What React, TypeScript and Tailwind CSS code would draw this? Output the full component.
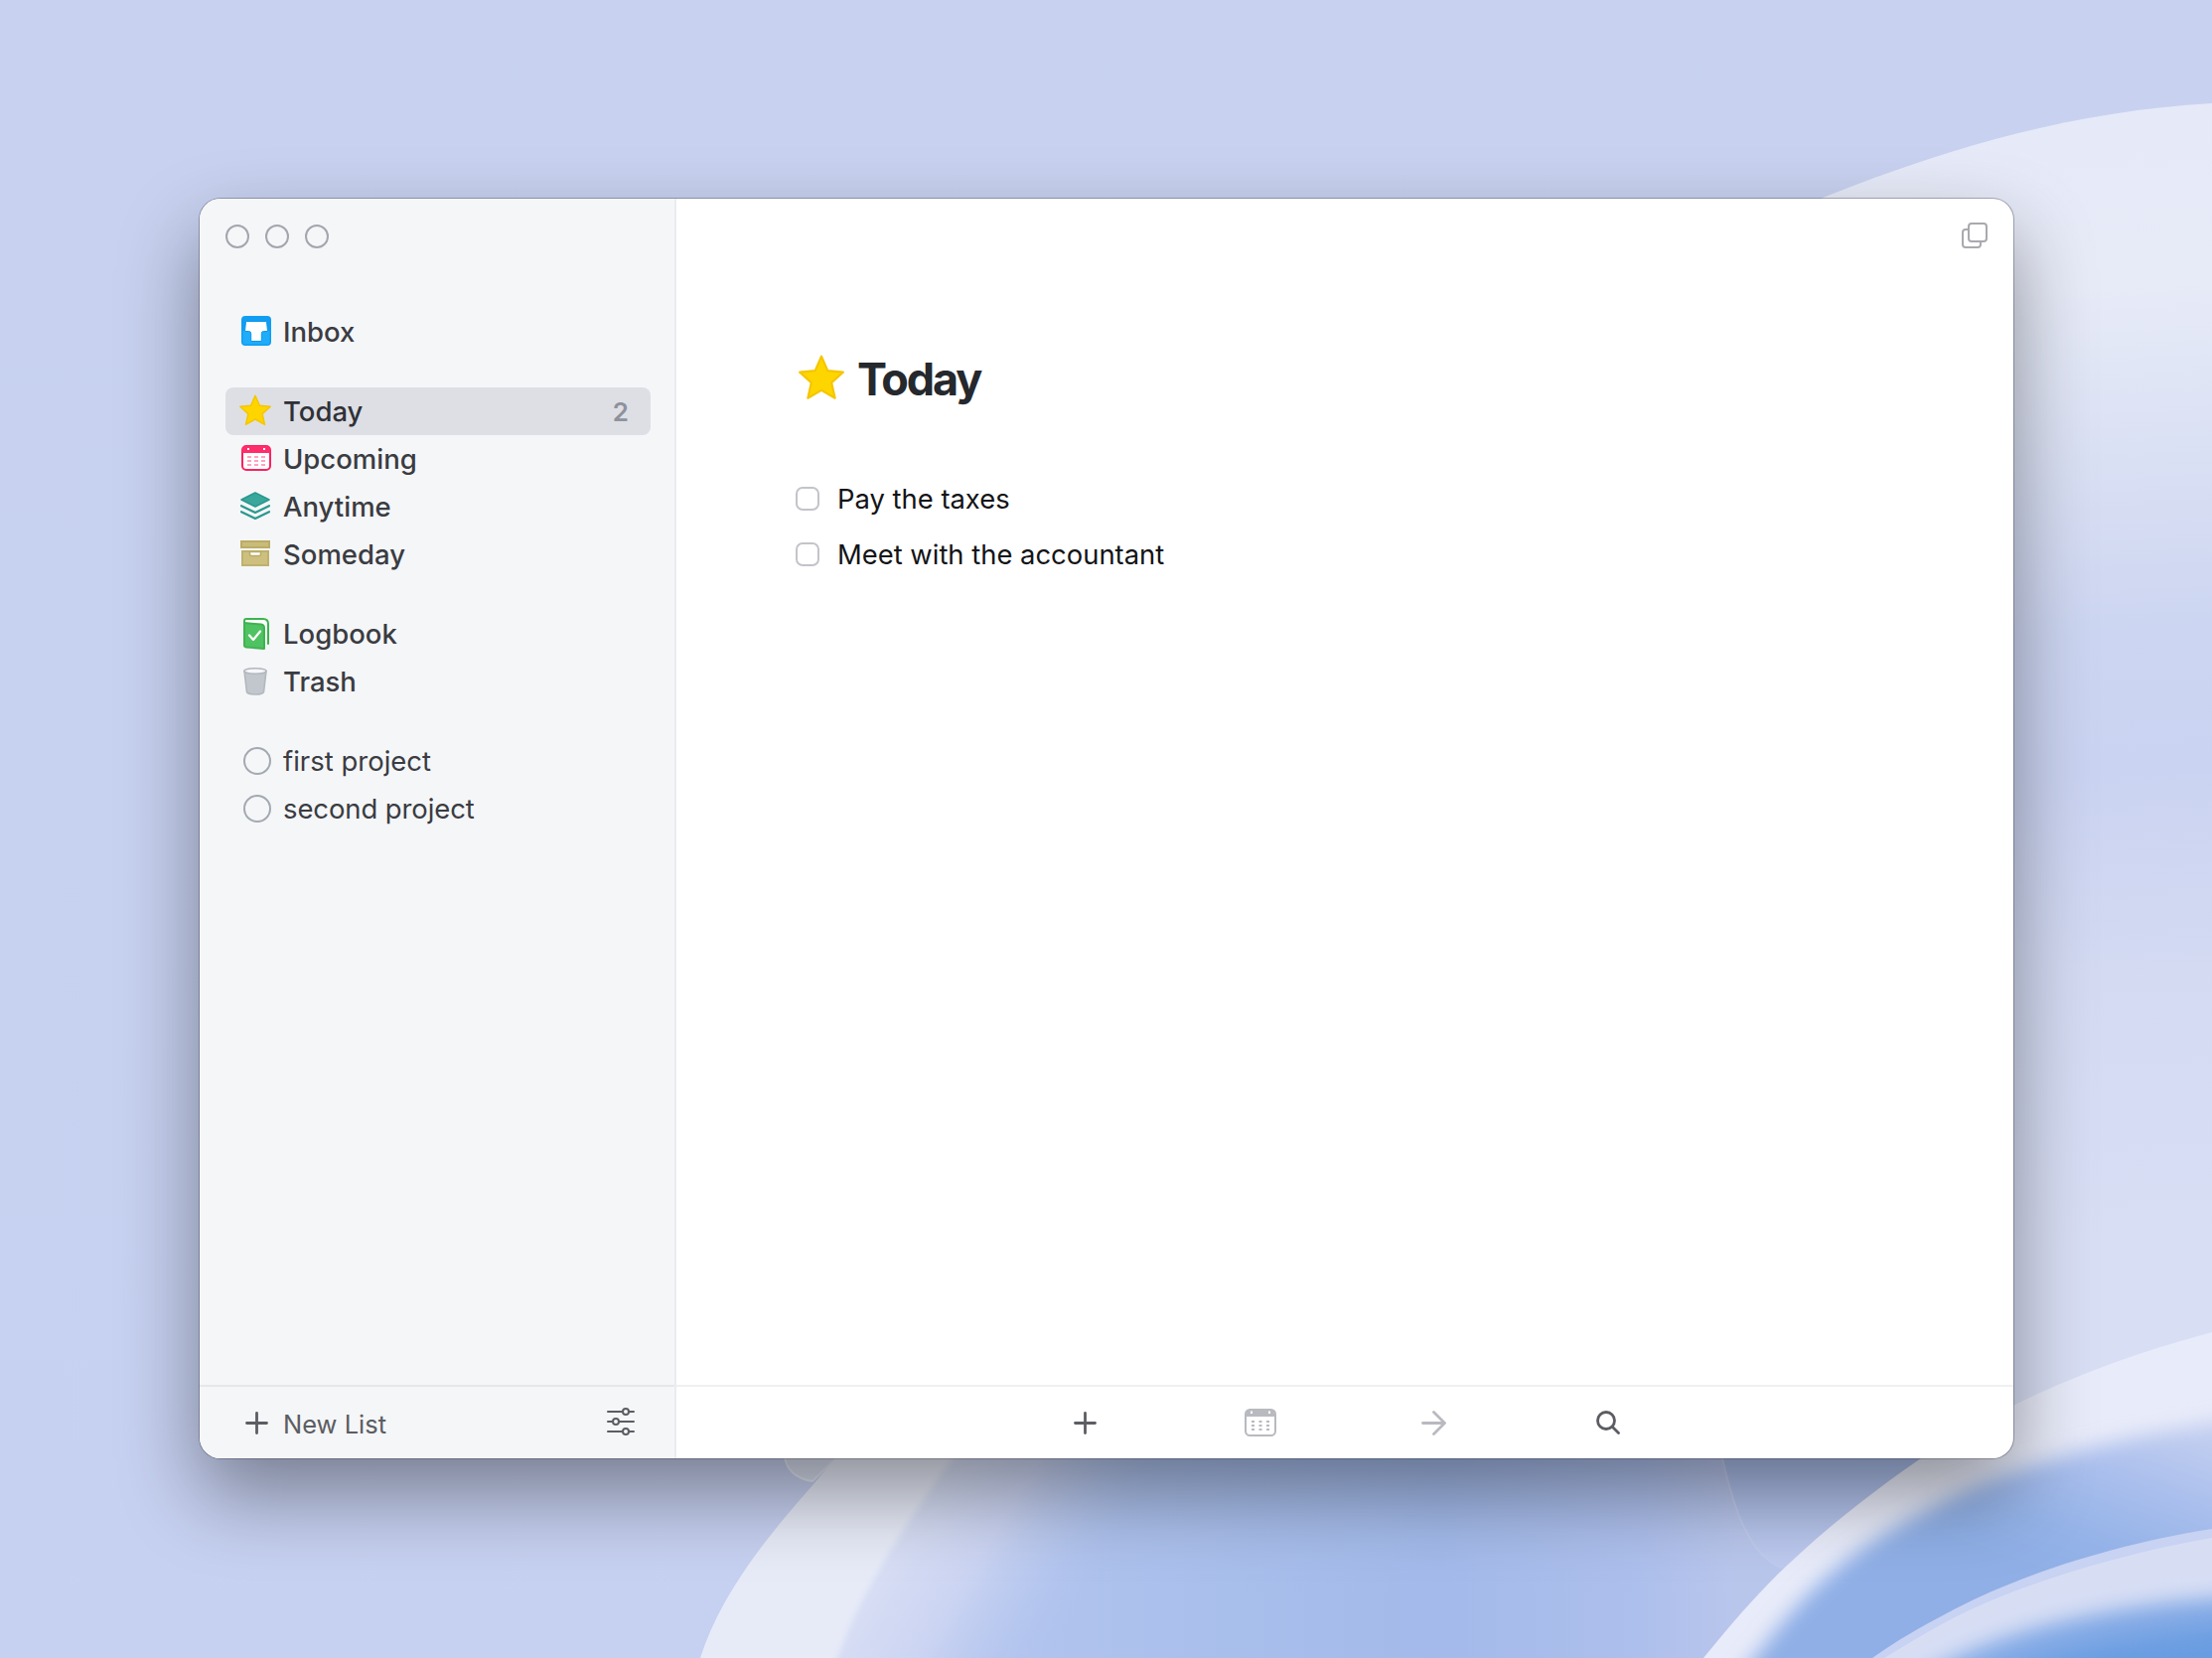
import type { ReactNode } from "react";

const Svg = ({ w, h, children, cls = "" }: { w: number; h: number; children: ReactNode; cls?: string }) => (
  <svg width={w} height={h} viewBox={`0 0 ${w} ${h}`} fill="none" className={`shrink-0 ${cls}`}>
    {children}
  </svg>
);

const OUTER_LOBE = "M1715 1669C1740 1638 1770 1603 1800 1575C1840 1537 1890 1498 1934 1468C2010 1417 2110 1372 2227 1341V1669Z";
const INNER_LOBE = "M1885 1669C1910 1651 1935 1637 1960 1624C2030 1586 2130 1554 2227 1539V1669Z";

function Wallpaper() {
  return (
    <svg
      className="absolute inset-0 h-full w-full"
      viewBox="0 0 2227 1669"
      preserveAspectRatio="none"
      fill="none"
    >
      <defs>
        <linearGradient id="base" x1="0" y1="0" x2="0" y2="1669" gradientUnits="userSpaceOnUse">
          <stop offset="0" stopColor="#c8d2f0" />
          <stop offset="1" stopColor="#c6d0f0" />
        </linearGradient>
        <linearGradient id="ribbon" x1="2080" y1="100" x2="2160" y2="1450" gradientUnits="userSpaceOnUse">
          <stop offset="0" stopColor="#e6eaf8" />
          <stop offset="0.14" stopColor="#e7ebf8" />
          <stop offset="0.26" stopColor="#dbe1f4" />
          <stop offset="0.4" stopColor="#ccd5f1" />
          <stop offset="0.5" stopColor="#cad3f1" />
          <stop offset="0.65" stopColor="#d3daf2" />
          <stop offset="0.85" stopColor="#d8def4" />
        </linearGradient>
        <linearGradient id="bowl" x1="850" y1="0" x2="1850" y2="0" gradientUnits="userSpaceOnUse">
          <stop offset="0" stopColor="#b8c8ee" />
          <stop offset="0.2" stopColor="#b0c3ee" />
          <stop offset="0.4" stopColor="#a8beeb" />
          <stop offset="0.6" stopColor="#a3baea" />
          <stop offset="0.8" stopColor="#adbfec" />
          <stop offset="0.9" stopColor="#b9c6ec" />
        </linearGradient>
        <linearGradient id="bowlEdge" x1="841" y1="1669" x2="996" y2="1762" gradientUnits="userSpaceOnUse">
          <stop offset="0" stopColor="#d6ddf4" />
          <stop offset="0.4" stopColor="#cbd4f2" />
          <stop offset="1" stopColor="#b5c6ee" stopOpacity="0" />
        </linearGradient>
        <linearGradient id="pocket" x1="0" y1="1468" x2="0" y2="1580" gradientUnits="userSpaceOnUse">
          <stop offset="0" stopColor="#a8bbe8" />
          <stop offset="1" stopColor="#bfcbef" />
        </linearGradient>
        <linearGradient id="band" x1="2180" y1="1430" x2="2120" y2="1600" gradientUnits="userSpaceOnUse">
          <stop offset="0" stopColor="#c2cef0" />
          <stop offset="0.35" stopColor="#acc0ed" />
          <stop offset="0.75" stopColor="#95b3e8" />
          <stop offset="1" stopColor="#8fafe6" />
        </linearGradient>
        <filter id="blur4" x="-20%" y="-20%" width="140%" height="140%">
          <feGaussianBlur stdDeviation="3" />
        </filter>
        <filter id="blur12" x="-20%" y="-20%" width="140%" height="140%">
          <feGaussianBlur stdDeviation="10" />
        </filter>
        <filter id="blur16" x="-20%" y="-20%" width="140%" height="140%">
          <feGaussianBlur stdDeviation="13" />
        </filter>
        <clipPath id="lobe">
          <path d={OUTER_LOBE} />
        </clipPath>
        <clipPath id="inner">
          <path d={INNER_LOBE} />
        </clipPath>
        <clipPath id="bowlClip">
          <path d="M705 1669C725 1608 765 1555 820 1493L880 1420H2000V1669Z" />
        </clipPath>
      </defs>
      <rect width="2227" height="1669" fill="url(#base)" />
      <path d="M1780 222L1840 197C1970 146 2090 112 2227 104V1669H1780Z" fill="url(#ribbon)" />
      <path d="M790 1440C786 1470 792 1487 818 1491L870 1440Z" fill="#d7ddef" stroke="#e4e8f5" strokeWidth="2" />
      <g clipPath="url(#bowlClip)">
        <rect x="600" y="1400" width="1400" height="269" fill="url(#bowl)" />
        <rect x="600" y="1400" width="800" height="269" fill="url(#bowlEdge)" />
        <path d="M660 1700L690 1400H1010C950 1480 870 1580 832 1700Z" fill="#e7ebf8" filter="url(#blur4)" />
        <path d="M1732 1460C1744 1510 1758 1570 1800 1580L2000 1480V1440H1728Z" fill="url(#pocket)" />
        <path d="M1732 1460C1744 1510 1758 1570 1800 1580" stroke="#c0cbed" strokeWidth="2" />
      </g>
      <path d={OUTER_LOBE} fill="#e8ebf9" />
      <g clipPath="url(#lobe)">
        <path
          d="M1758 1680C1785 1645 1810 1612 1840 1587C1870 1560 1900 1540 1940 1520C2010 1482 2110 1448 2260 1428V1760H1700Z"
          fill="url(#band)"
          filter="url(#blur12)"
        />
      </g>
      <path d={INNER_LOBE} fill="#c8d2f2" />
      <path d="M1897 1669C1920 1655 1945 1640 1968 1628C2040 1592 2140 1563 2227 1548V1669Z" fill="#d7def4" />
      <g clipPath="url(#inner)">
        <path d="M1930 1690C1990 1650 2110 1612 2280 1606V1760H1900Z" fill="#86ace6" filter="url(#blur12)" />
        <path d="M1950 1720C2020 1670 2130 1642 2290 1634V1780H1930Z" fill="#699ce1" filter="url(#blur16)" />
      </g>
    </svg>
  );
}

const STAR = "M16 1.2L20.4 11.2L31.2 12.3L23.1 19.6L25.5 30.4L16 25L6.5 30.4L8.9 19.6L.8 12.3L11.6 11.2Z";

const Star = ({ size, cls = "" }: { size: number; cls?: string }) => (
  <svg width={size} height={size} viewBox="0 0 32 32" className={`shrink-0 ${cls}`}>
    <path d={STAR} fill="#ffd500" stroke="#f4c600" strokeWidth="1.5" strokeLinejoin="round" />
  </svg>
);

const Inbox = () => (
  <Svg w={30} h={30}>
    <rect width="30" height="30" rx="4" fill="#109df2" />
    <path d="M1.500 15H28.500V26A2.500 2.500 0 0 1 26 28.500H4A2.500 2.500 0 0 1 1.500 26Z" fill="#1fadfa" />
    <path
      d="M4.500 5.500H25.500L26.500 15.500H22.500Q20.300 15.500 20.300 17.800V25.500H9.700V17.800Q9.700 15.500 7.500 15.500H3.500Z"
      fill="#fff"
      stroke="#0f97ea"
      strokeWidth="1"
      strokeLinejoin="round"
    />
  </Svg>
);

const Upcoming = () => (
  <Svg w={30} h={26}>
    <rect x="1" y="1" width="28" height="24" rx="4" fill="#fff" stroke="#fa2160" strokeWidth="2" />
    <path d="M1 8V5A4 4 0 0 1 5 1H25A4 4 0 0 1 29 5V8Z" fill="#ff2d6b" />
    <path d="M6 4H8M22 4H24" stroke="#fff" strokeWidth="2" />
    <path d="M6 12H10M13 12H17M20 12H24M6 16H10M13 16H17M20 16H24M6 20H10M13 20H17M20 20H24" stroke="#ffa3be" strokeWidth="2" />
  </Svg>
);

const Anytime = () => (
  <Svg w={30} h={28}>
    <path d="M15 1L29 8L15 15L1 8Z" fill="#3aa79c" stroke="#2a998d" strokeWidth="1.600" strokeLinejoin="round" />
    <path d="M1 14.200L15 21L29 14.200M1 20.200L15 27L29 20.200" stroke="#2a998d" strokeWidth="2.200" strokeLinecap="round" strokeLinejoin="round" />
  </Svg>
);

const Someday = () => (
  <Svg w={30} h={26}>
    <rect x="1" y="1" width="28" height="6" fill="#c9bb78" stroke="#bbac67" strokeWidth="2" />
    <path d="M2 11H28V25H2Z" fill="#cdc07f" stroke="#bfb16d" strokeWidth="2" />
    <path d="M9.500 11.500H20.500V14Q20.500 15.500 19 15.500H11Q9.500 15.500 9.500 14Z" fill="#fff" stroke="#bbac67" strokeWidth="1.500" />
  </Svg>
);

const Logbook = () => (
  <Svg w={26} h={32}>
    <path d="M1 5V3Q1 1 3 1H20Q25 1 25 6V26" fill="#fff" stroke="#3bb44f" strokeWidth="2" strokeLinecap="round" />
    <path d="M1 5L18 6.500Q21 7 21 10V31L3 29.400Q1 29.200 1 27.500Z" fill="#4fc361" stroke="#3fb352" strokeWidth="2" strokeLinejoin="round" />
    <path d="M6 17.500L10 22L17 13.500" stroke="#fff" strokeWidth="2.200" strokeLinecap="round" strokeLinejoin="round" />
  </Svg>
);

const Trash = () => (
  <Svg w={24} h={28}>
    <path d="M1 3.500L3.500 24.500Q4 27 12 27Q20 27 20.500 24.500L23 3.500Z" fill="#c1c7cc" stroke="#b2b8be" strokeWidth="1.600" />
    <ellipse cx="12" cy="3.500" rx="11" ry="2.700" fill="#f6f7f9" stroke="#b2b8be" strokeWidth="1.600" />
  </Svg>
);

const Circle = () => (
  <Svg w={28} h={28}>
    <circle cx="14" cy="14" r="13" stroke="#a4a9b1" strokeWidth="2" />
  </Svg>
);

type RowProps = { icon: ReactNode; pad: string; label: string; text?: string; count?: number; active?: boolean };

const Row = ({ icon, pad, label, text = "font-medium", count, active }: RowProps) => (
  <li className={`flex h-12 items-center rounded-lg pr-[22px] ${active ? "bg-[#dedfe5]" : ""}`}>
    <span className={`flex w-[58px] shrink-0 ${pad}`}>{icon}</span>
    <span className={`grow pt-0.5 text-[27.5px] leading-none whitespace-nowrap ${active ? "text-[#2f3137]" : "text-[#3a3c42]"} ${text}`}>{label}</span>
    {count !== undefined && <span className="pt-0.5 text-[26px] leading-none font-semibold text-[#8d929c]">{count}</span>}
  </li>
);

const Task = ({ label }: { label: string }) => (
  <li className="flex h-14 items-center gap-[18px]">
    <span className="size-6 shrink-0 rounded-[7px] border-2 border-[#c3c4ca]" />
    <span className="pt-0.5 text-[27.4px] leading-none whitespace-nowrap text-[#131417]">{label}</span>
  </li>
);

export default function App() {
  return (
    <div className="relative h-[1669px] w-[2227px] overflow-hidden bg-[#c7d1f0] font-['Inter',sans-serif]">
      <Wallpaper />
      <div className="relative pt-[200px] pl-[201px]">
        <div className="flex h-[1268px] w-[1826px] overflow-hidden rounded-[21px] bg-white shadow-[0_0_0_1px_rgba(50,50,70,0.35),0_36px_80px_rgba(0,0,0,0.4)]">
          <aside className="flex w-[480px] shrink-0 flex-col border-r-2 border-[#ebecef] bg-[#f5f6f8]">
            <div className="flex gap-4 pt-[26px] pl-[26px]">
              <span className="size-6 rounded-full border-2 border-[#a3a6ad]" />
              <span className="size-6 rounded-full border-2 border-[#a3a6ad]" />
              <span className="size-6 rounded-full border-2 border-[#a3a6ad]" />
            </div>
            <nav className="flex grow flex-col gap-8 pt-[60px] pr-6 pl-[26px]">
              <ul>
                <Row icon={<Inbox />} pad="pl-4 pb-0.5" label="Inbox" />
              </ul>
              <ul>
                <Row icon={<Star size={32} />} pad="pl-3.5 pb-0.5" label="Today" count={2} active />
                <Row icon={<Upcoming />} pad="pl-4 pb-0.5" label="Upcoming" />
                <Row icon={<Anytime />} pad="pl-[15px] pb-0.5" label="Anytime" />
                <Row icon={<Someday />} pad="pl-[15px] pb-0.5" label="Someday" />
              </ul>
              <ul>
                <Row icon={<Logbook />} pad="pl-[18px]" label="Logbook" />
                <Row icon={<Trash />} pad="pl-[18px]" label="Trash" />
              </ul>
              <ul>
                <Row icon={<Circle />} pad="pl-[18px]" label="first project" text="font-normal" />
                <Row icon={<Circle />} pad="pl-[18px]" label="second project" text="font-normal tracking-[-0.004em]" />
              </ul>
            </nav>
            <footer className="flex h-[74px] items-center border-t-2 border-[#e6e7ea] pr-10 pl-[46px] text-[#5b5d62]">
              <Svg w={23} h={23}>
                <path d="M11.500 1.500V21.500M1.500 11.500H21.500" stroke="currentColor" strokeWidth="2.800" strokeLinecap="round" />
              </Svg>
              <span className="grow pt-[3px] pl-[15px] text-[25.5px] leading-none">New List</span>
              <Svg w={28} h={28} cls="mb-0.5">
                <path d="M1 4H15M23 4H27M1 14H5M13 14H27M1 24H15M23 24H27" stroke="currentColor" strokeWidth="2" strokeLinecap="round" />
                <circle cx="19" cy="4" r="3" stroke="currentColor" strokeWidth="2" />
                <circle cx="9" cy="14" r="3" stroke="currentColor" strokeWidth="2" />
                <circle cx="19" cy="24" r="3" stroke="currentColor" strokeWidth="2" />
              </Svg>
            </footer>
          </aside>

          <main className="flex grow flex-col">
            <div className="flex justify-end pt-6 pr-[26px]">
              <Svg w={26} h={26}>
                <path d="M6 7H4Q1 7 1 10V22Q1 25 4 25H16Q19 25 19 22V20" stroke="#a9a9af" strokeWidth="2" />
                <rect x="7" y="1" width="18" height="18" rx="3" stroke="#a9a9af" strokeWidth="2" />
              </Svg>
            </div>
            <div className="grow pt-[104px] pl-[120px]">
              <h1 className="flex h-[54px] items-center text-[45px] leading-none font-bold text-[#25282d]">
                <Star size={46} cls="mr-[13px] mb-0.5 ml-[3px]" />
                <span className="tracking-[-0.048em]">Today</span>
              </h1>
              <ul className="pt-[66px]">
                <Task label="Pay the taxes" />
                <Task label="Meet with the accountant" />
              </ul>
            </div>
            <footer className="flex h-[74px] items-center border-t-2 border-[#f0f0f1] pl-[400px]">
              <div className="flex w-[172px]">
                <Svg w={23} h={23}>
                  <path d="M11.500 1.500V21.500M1.500 11.500H21.500" stroke="#5b5d62" strokeWidth="2.800" strokeLinecap="round" />
                </Svg>
              </div>
              <div className="flex w-[178px]">
                <Svg w={32} h={28}>
                  <rect x="1" y="1" width="30" height="26" rx="4.500" stroke="#b9bac0" strokeWidth="2" />
                  <path d="M1 8V5.500A4.500 4.500 0 0 1 5.500 1H26.500A4.500 4.500 0 0 1 31 5.500V8Z" fill="#b9bac0" />
                  <path d="M7 2.500V5M25 2.500V5" stroke="#fff" strokeWidth="2" />
                  <path d="M7 13H10M14.500 13H17.500M22 13H25M7 17H10M14.500 17H17.500M22 17H25M7 21H10M14.500 21H17.500M22 21H25" stroke="#b9bac0" strokeWidth="2" />
                </Svg>
              </div>
              <div className="flex w-[176px]">
                <Svg w={25} h={25}>
                  <path d="M1.500 12.500H23M12.500 1.500L23.500 12.500L12.500 23.500" stroke="#b9bac0" strokeWidth="2.800" strokeLinecap="round" strokeLinejoin="round" />
                </Svg>
              </div>
              <Svg w={24} h={24}>
                <circle cx="10" cy="10" r="8.500" stroke="#5b5d62" strokeWidth="2.800" />
                <path d="M16.500 16.500L22.500 22.500" stroke="#5b5d62" strokeWidth="2.800" strokeLinecap="round" />
              </Svg>
            </footer>
          </main>
        </div>
      </div>
    </div>
  );
}
